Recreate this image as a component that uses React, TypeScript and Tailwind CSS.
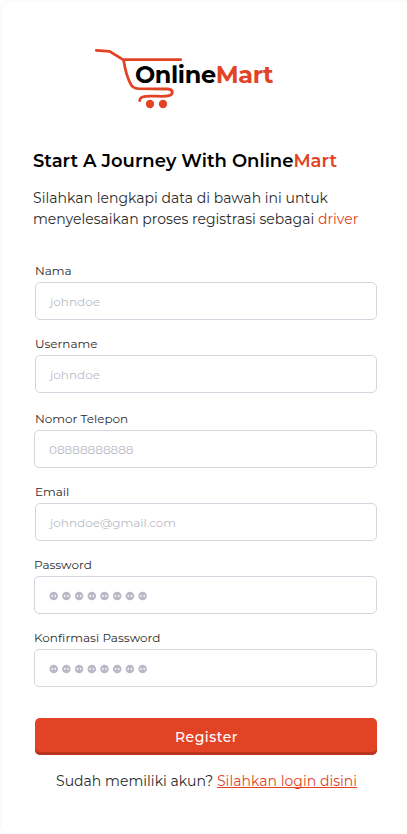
import React from "react";

type FieldProps = {
  label: string;
  placeholder?: string;
  masked?: boolean;
  className?: string;
  labelClass?: string;
  boxClass?: string;
};

function MaskedDots() {
  return (
    <svg className="mt-px" width="100" height="10" viewBox="0 0 100 10" aria-hidden="true">
      {Array.from({ length: 8 }, (_, i) => (
        <g key={i} transform={`translate(${4.7 + i * 12.7} 5)`}>
          <circle r="4.3" fill="#b9b9c7" />
          <circle cx="-1.6" cy="-0.1" r="0.85" fill="#fff" />
          <circle cx="1.6" cy="-0.1" r="0.85" fill="#fff" />
        </g>
      ))}
    </svg>
  );
}

function Field({ label, placeholder, masked, className = "", labelClass = "ml-px", boxClass = "" }: FieldProps) {
  return (
    <label className={`flex flex-col ${className}`}>
      <span className={`h-[19px] whitespace-nowrap text-[12px] leading-4 text-[#2b2b2b] ${labelClass}`}>{label}</span>
      <span className={`flex h-[38px] items-center rounded-[5px] border border-[#d5d5e0] bg-white pl-[14px] ${boxClass}`}>
        {masked ? <MaskedDots /> : <span className="mt-[2px] whitespace-nowrap text-[12px] leading-4 text-[#bbbbc7]">{placeholder}</span>}
      </span>
    </label>
  );
}

function Logo() {
  return (
    <div className="relative ml-[85px] h-[85px] w-[200px]">
      <svg className="absolute inset-0" width="200" height="85" viewBox="0 0 600 255" fill="none" stroke="#e34325" strokeLinecap="round" strokeLinejoin="round">
        <path d="M34 46L74 49L114 74H287" strokeWidth="8.5" />
        <path d="M116 76C120 103 128 130 137 147C142 158 148 160 160 161L249 162C266 163 265 179 252 182C232 187 205 181 181 184C169 186 165 188 164 197" strokeWidth="8.5" />
        <circle cx="195" cy="207" r="12.5" fill="#e34325" stroke="none" />
        <circle cx="234" cy="207" r="12.5" fill="#e34325" stroke="none" />
      </svg>
      <span className="absolute left-[50px] top-[25px] whitespace-nowrap text-[24px] font-bold leading-[30px] tracking-[-0.4px] text-black">
        Online<span className="text-[#e34325]">Mart</span>
      </span>
    </div>
  );
}

export default function App() {
  return (
    <main className="h-[834px] w-[407px] overflow-hidden rounded-l-lg border-l-2 border-t-2 border-[#fafafa] bg-white pt-[33px] font-['Montserrat','Inter',sans-serif]">
      <div className="-ml-[2px]">
        <Logo />
        <h1 className="ml-[33px] mt-[29px] whitespace-nowrap text-[18px] font-semibold leading-6 tracking-[0.01px] text-black">
          Start A Journey With Online<span className="text-[#e34325]">Mart</span>
        </h1>
        <p className="ml-[33px] mt-[15px] whitespace-nowrap text-[14px] leading-[21px] tracking-[0.02px] text-[#2b2b2b]">
          <span className="block">Silahkan lengkapi data di bawah ini untuk</span>
          <span className="block">menyelesaikan proses registrasi sebagai <span className="text-[#e34325]">driver</span></span>
        </p>
        <form className="ml-[34px] mt-[33px] flex w-[343px] flex-col gap-4">
          <Field label="Nama" placeholder="johndoe" boxClass="ml-px" />
          <Field label="Username" placeholder="johndoe" boxClass="ml-px" />
          <Field label="Nomor Telepon" placeholder="08888888888" className="mt-[2px]" />
          <Field label="Email" placeholder="johndoe@gmail.com" boxClass="ml-px" />
          <Field label="Password" masked labelClass="ml-0" />
          <Field label="Konfirmasi Password" masked labelClass="ml-0 tracking-[0.04px]" />
          <button type="button" className="ml-px mt-[15px] h-[37px] rounded-[5px] bg-[#e34325] pl-px pt-[2px] text-[14px] font-medium tracking-[0.5px] text-white shadow-[inset_0_-3px_0_#b9351d]">
            Register
          </button>
        </form>
        <p className="ml-[56px] mt-[16px] whitespace-nowrap text-[14px] leading-5 tracking-[0.025px] text-[#2b2b2b]">
          <span>Sudah memiliki akun?</span> <a className="text-[#e34325] underline decoration-1 underline-offset-1 [text-decoration-skip-ink:none]">Silahkan login disini</a>
        </p>
      </div>
    </main>
  );
}
